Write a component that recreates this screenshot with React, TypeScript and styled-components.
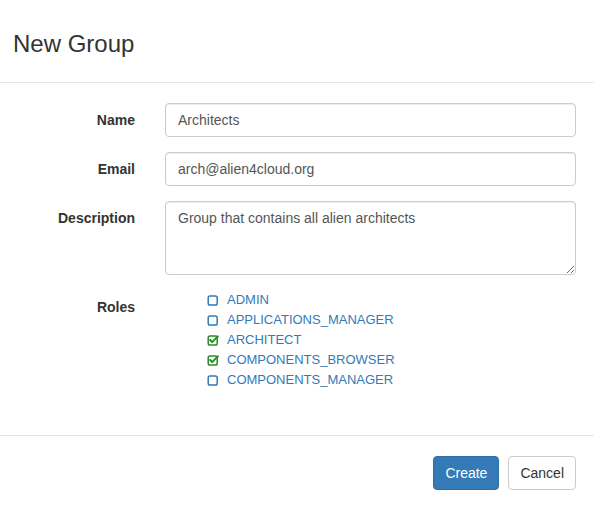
import React from "react";
import styled, { createGlobalStyle } from "styled-components";

const Global = createGlobalStyle`
  html, body { margin: 0; padding: 0; background: #fff; }
  body {
    font-family: "Liberation Sans", Helvetica, Arial, sans-serif;
    font-size: 14px;
    line-height: 20px;
    color: #333;
  }
  * { box-sizing: border-box; }
`;

const Modal = styled.div`
  width: 594px;
  background: #fff;
`;

const Header = styled.div`
  padding: 31px 15px 25px 13px;
  border-bottom: 1px solid #e5e5e5;
`;

const Title = styled.h3`
  margin: 0;
  font-size: 24px;
  line-height: 26px;
  font-weight: 500;
  color: #333;
`;

const Body = styled.div`
  padding: 20px 18px 45px 15px;
`;

const Form = styled.form`
  display: flex;
  flex-direction: column;
  gap: 15px;
`;

const Group = styled.div`
  display: grid;
  grid-template-columns: 120px 1fr;
  column-gap: 30px;
  align-items: start;
`;

const Label = styled.label`
  text-align: right;
  font-weight: bold;
  padding-top: 7px;
  font-size: 14px;
  line-height: 20px;
  color: #333;
`;

const Input = styled.input`
  display: block;
  width: 100%;
  height: 34px;
  padding: 6px 12px;
  font: inherit;
  font-size: 14px;
  line-height: 20px;
  color: #555;
  background: #fff;
  border: 1px solid #ccc;
  border-radius: 4px;
  box-shadow: inset 0 1px 1px rgba(0, 0, 0, 0.075);
  outline: none;
`;

const TextArea = styled.textarea`
  display: block;
  width: 100%;
  height: 74px;
  padding: 6px 12px;
  font: inherit;
  font-size: 14px;
  line-height: 20px;
  color: #555;
  background: #fff;
  border: 1px solid #ccc;
  border-radius: 4px;
  box-shadow: inset 0 1px 1px rgba(0, 0, 0, 0.075);
  outline: none;
  resize: vertical;
`;

const RoleList = styled.ul`
  list-style: none;
  margin: 0;
  padding: 0 0 0 42px;
`;

const RoleItem = styled.li`
  display: flex;
  align-items: center;
  gap: 8px;
  height: 20px;
  font-size: 13px;
  color: #337ab7;
  cursor: pointer;
`;

const Footer = styled.div`
  display: flex;
  justify-content: flex-end;
  gap: 9px;
  padding: 20px 18px 19px 15px;
  border-top: 1px solid #e5e5e5;
`;

const Button = styled.button<{ $primary?: boolean }>`
  height: 34px;
  padding: 6px 11px;
  font: inherit;
  font-size: 14px;
  line-height: 20px;
  border-radius: 4px;
  border: 1px solid ${(p) => (p.$primary ? "#2e6da4" : "#ccc")};
  background: ${(p) => (p.$primary ? "#337ab7" : "#fff")};
  color: ${(p) => (p.$primary ? "#fff" : "#333")};
  cursor: pointer;
`;

const Box = ({ checked }: { checked: boolean }) =>
  checked ? (
    <svg width="12" height="12" viewBox="0 0 12 12">
      <rect x="1.2" y="2" width="9" height="9" rx="1.8" fill="none" stroke="#2b8a2b" strokeWidth="1.5" />
      <path d="M3.2 6 L5.2 8.1 L10.8 2.4" fill="none" stroke="#2b8a2b" strokeWidth="2" strokeLinecap="round" strokeLinejoin="round" />
    </svg>
  ) : (
    <svg width="12" height="12" viewBox="0 0 12 12">
      <rect x="1.2" y="2" width="9" height="9" rx="1.8" fill="none" stroke="#337ab7" strokeWidth="1.5" />
    </svg>
  );

const roles = [
  { name: "ADMIN", checked: false },
  { name: "APPLICATIONS_MANAGER", checked: false },
  { name: "ARCHITECT", checked: true },
  { name: "COMPONENTS_BROWSER", checked: true },
  { name: "COMPONENTS_MANAGER", checked: false },
];

export default function App() {
  return (
    <Modal>
      <Global />
      <Header>
        <Title>New Group</Title>
      </Header>
      <Body>
        <Form>
          <Group>
            <Label>Name</Label>
            <Input defaultValue="Architects" />
          </Group>
          <Group>
            <Label>Email</Label>
            <Input defaultValue="arch@alien4cloud.org" />
          </Group>
          <Group>
            <Label>Description</Label>
            <TextArea defaultValue="Group that contains all alien architects" />
          </Group>
          <Group>
            <Label>Roles</Label>
            <RoleList>
              {roles.map((r) => (
                <RoleItem key={r.name}>
                  <Box checked={r.checked} />
                  {r.name}
                </RoleItem>
              ))}
            </RoleList>
          </Group>
        </Form>
      </Body>
      <Footer>
        <Button $primary type="button">Create</Button>
        <Button type="button">Cancel</Button>
      </Footer>
    </Modal>
  );
}
